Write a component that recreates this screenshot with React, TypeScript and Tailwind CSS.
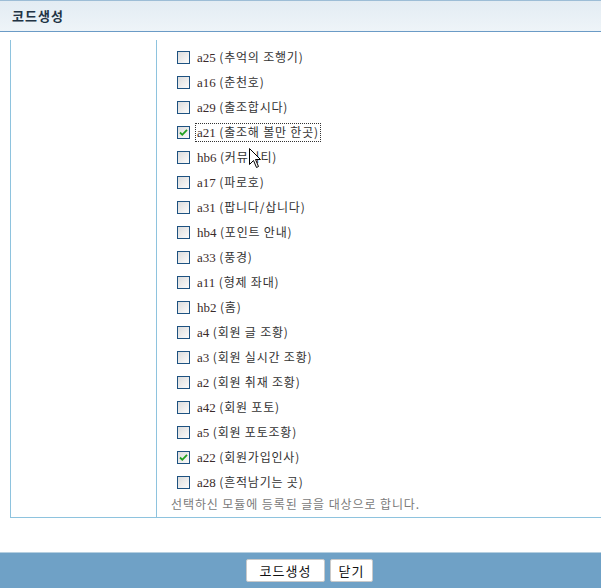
import React from "react";

const items: [string, string, boolean][] = [
  ["a25", "추억의 조행기", false],
  ["a16", "춘천호", false],
  ["a29", "출조합시다", false],
  ["a21", "출조해 볼만 한곳", true],
  ["hb6", "커뮤니티", false],
  ["a17", "파로호", false],
  ["a31", "팝니다/삽니다", false],
  ["hb4", "포인트 안내", false],
  ["a33", "풍경", false],
  ["a11", "형제 좌대", false],
  ["hb2", "홈", false],
  ["a4", "회원 글 조황", false],
  ["a3", "회원 실시간 조황", false],
  ["a2", "회원 취재 조황", false],
  ["a42", "회원 포토", false],
  ["a5", "회원 포토조황", false],
  ["a22", "회원가입인사", true],
  ["a28", "흔적남기는 곳", false],
];

function Box({ checked }: { checked: boolean }) {
  return (
    <span className="relative w-[13px] h-[13px] border border-[#1d5281] bg-gradient-to-br from-[#dcdcdc] to-[#fbfbfb] shrink-0">
      {checked && (
        <svg width="11" height="11" viewBox="0 0 11 11" className="absolute left-0 top-0">
          <path d="M2 5.5 L4.3 7.8 L9 2.8" stroke="#21a121" strokeWidth="1.8" fill="none" />
        </svg>
      )}
    </span>
  );
}

export default function App() {
  const ko = { fontFamily: '"Noto Sans CJK KR", "Noto Sans", sans-serif' };
  return (
    <div className="relative w-[601px] h-[588px] bg-white overflow-hidden" style={ko}>
      <div className="h-[32px] border-t border-b border-t-[#9dbdd6] border-b-[#6b9bc6] bg-gradient-to-b from-[#e3ecf3] to-[#eef4f8] flex items-center pl-[12px]">
        <span className="text-[13px] font-bold text-[#223344] tracking-[1px]">코드생성</span>
      </div>
      <div className="ml-[10px] mt-[8px] w-[600px] flex border-l border-b border-[#8ec3de]">
        <div className="w-[146px] border-r border-[#8ec3de]" />
        <div className="pl-[20px] pt-[5px] pb-[5px] flex flex-col">
          {items.map(([code, name, checked]) => (
            <div key={code} className="h-[25px] flex items-center gap-[6px]">
              <Box checked={checked} />
              <span
                className={
                  "text-[12px] text-[#333] leading-[16px] px-[1px] tracking-[0.8px] " +
                  (code === "a21" ? "outline outline-1 outline-dotted outline-[#333]" : "")
                }
              >
                <span style={{ fontFamily: '"Liberation Serif", serif' }} className="text-[13px] text-[#3a2a2a] tracking-normal">{code}</span>{" "}
                ({name})
              </span>
            </div>
          ))}
          <div className="ml-[-6px] mt-[1px] text-[12px] text-[#7a7a7a] leading-[16px] tracking-[0.9px]">
            선택하신 모듈에 등록된 글을 대상으로 합니다.
          </div>
        </div>
      </div>
      <div className="absolute left-0 bottom-0 w-full h-[36px] bg-[#6fa1c6] border-t border-[#b5cfe0] flex items-center justify-center gap-[5px] pl-[18px]">
        <button className="w-[79px] h-[23px] bg-white border border-[#c9c9c9] rounded-[2px] text-[13px] tracking-[1px] text-[#111]">코드생성</button>
        <button className="w-[43px] h-[23px] bg-white border border-[#c9c9c9] rounded-[2px] text-[13px] tracking-[1px] text-[#111]">닫기</button>
      </div>
      <svg className="absolute left-[249px] top-[148px]" width="13" height="21" viewBox="0 0 13 21">
        <path d="M0.5 0.5 L0.5 16.5 L4.5 12.5 L7.5 19.5 L9.5 18.5 L6.5 11.5 L11.5 11.5 Z" fill="white" stroke="black" strokeWidth="1" />
      </svg>
    </div>
  );
}
